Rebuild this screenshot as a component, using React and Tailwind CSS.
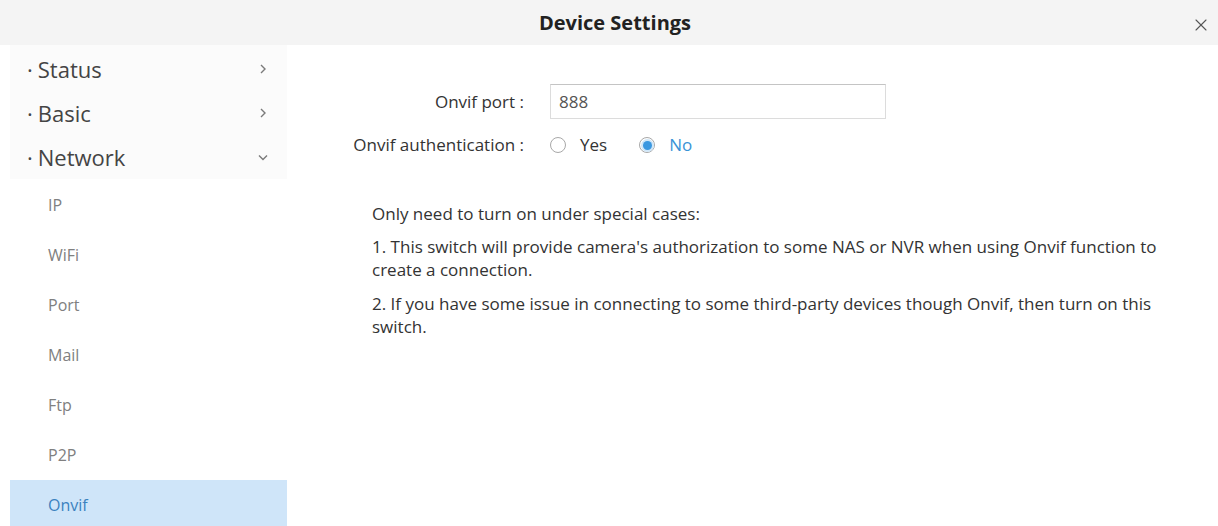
import { X } from "lucide-react";

const subItems = ["IP", "WiFi", "Port", "Mail", "Ftp", "P2P", "Onvif"];

function Chevron({ down }) {
  return (
    <svg width="12" height="12" viewBox="0 0 12 12" className="text-[#7a7a7a]">
      {down ? (
        <path d="M2 4.5 L6 8.5 L10 4.5" fill="none" stroke="currentColor" strokeWidth="1.4" />
      ) : (
        <path d="M4 2 L8 6 L4 10" fill="none" stroke="currentColor" strokeWidth="1.4" />
      )}
    </svg>
  );
}

function Radio({ checked, label }) {
  return (
    <label className="flex items-center gap-[14px]">
      <span className="flex h-[16px] w-[16px] items-center justify-center rounded-full border border-[#a8a8a8] bg-white">
        {checked ? (
          <span className="h-[9px] w-[9px] rounded-full bg-[#3a97e0] ring-2 ring-[#cfe6f8]" />
        ) : null}
      </span>
      <span className={checked ? "text-[#3a93d6]" : "text-[#333]"}>{label}</span>
    </label>
  );
}

export default function App() {
  return (
    <div
      className="h-[526px] w-[1218px] overflow-hidden bg-white text-[#333]"
      style={{ fontFamily: '"Open Sans", "Noto Sans", sans-serif' }}
    >
      {/* title bar */}
      <div className="relative flex h-[45px] items-center justify-center bg-[#f4f4f4]">
        <span className="ml-[12px] text-[20px] font-bold text-[#222]">Device Settings</span>
        <X className="absolute right-[7px] top-[15px] h-[20px] w-[20px] text-[#555]" strokeWidth={1.3} />
      </div>

      <div className="flex">
        {/* side menu */}
        <div className="w-[298px] shrink-0 pl-[10px] pr-[11px]">
          <div className="bg-[#fbfbfb] pt-[2px]">
            {[
              ["Status", false],
              ["Basic", false],
              ["Network", true],
            ].map(([name, open]) => (
              <div key={name} className="flex h-[44px] items-center justify-between pl-[17px] pr-[18px]">
                <span className="text-[22px] text-[#444]">
                  <span className="mr-[5px]">·</span>
                  {name}
                </span>
                <Chevron down={open} />
              </div>
            ))}
          </div>
          <div className="pt-[1px]">
            {subItems.map((s) => (
              <div
                key={s}
                className={
                  "flex h-[50px] items-center pl-[38px] text-[16px] " +
                  (s === "Onvif" ? "bg-[#cfe5f9] text-[#3b82bf]" : "text-[#808080]")
                }
              >
                {s}
              </div>
            ))}
          </div>
        </div>

        {/* content */}
        <div className="flex-1 pt-[39px] text-[17px]">
          <div className="flex items-center">
            <div className="w-[252px] shrink-0 pr-[26px] text-right">Onvif port :</div>
            <div className="flex h-[35px] w-[336px] items-center border border-[#dcdcdc] border-t-[#c4c4c4] px-[8px] text-[#555]">
              888
            </div>
          </div>
          <div className="mt-[11px] flex h-[30px] items-center">
            <div className="w-[252px] shrink-0 pr-[26px] text-right">Onvif authentication :</div>
            <div className="flex items-center gap-[32px]">
              <Radio label="Yes" />
              <Radio checked label="No" />
            </div>
          </div>

          <div className="mt-[42px] pl-[74px] leading-[23px] text-[#333]">
            <p>Only need to turn on under special cases:</p>
            <p className="mt-[10px]">
              1. This switch will provide camera's authorization to some NAS or NVR when using Onvif function to
              <br />
              create a connection.
            </p>
            <p className="mt-[11px]">
              2. If you have some issue in connecting to some third-party devices though Onvif, then turn on this
              <br />
              switch.
            </p>
          </div>
        </div>
      </div>
    </div>
  );
}
